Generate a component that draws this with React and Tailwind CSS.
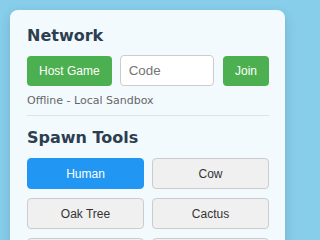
import { useState } from "react";

const tools = ["Human", "Cow", "Oak Tree", "Cactus", "Pine Tree", "Rock"];

const App = () => {
  const [selected, setSelected] = useState("Human");
  const [code, setCode] = useState("");

  return (
    <div className="h-screen w-full overflow-hidden bg-[#87ceeb] pt-[10px] pl-[10px]">
      <div className="w-[275px] rounded-lg bg-white/90 pt-4 pb-4 pl-[17px] pr-4 shadow-[0_4px_12px_rgba(0,0,0,0.15)] font-['DejaVu_Sans',sans-serif]">
        {/* network */}
        <h2 className="mb-[10px] text-[16px] leading-[19px] font-bold text-[#2c3e50]">Network</h2>
        <div className="flex items-center gap-2 font-['Liberation_Sans',Arial,sans-serif]">
          <button className="h-[30px] shrink-0 rounded bg-[#4caf50] px-3 text-[12px] text-white">
            Host Game
          </button>
          <input
            className="h-[31px] min-w-0 flex-1 rounded border border-[#ccc] bg-white px-2 text-[13.33px] text-[#333] outline-none placeholder:text-[#757575]"
            type="text"
            placeholder="Code"
            value={code}
            onChange={(e) => setCode(e.target.value)}
          />
          <button className="ml-px h-[30px] shrink-0 rounded bg-[#4caf50] px-3 text-[12px] text-white">
            Join
          </button>
        </div>
        <p className="mt-2 text-[11px] leading-[13px] text-[#666]">Offline - Local Sandbox</p>
        <div className="mt-[8px] border-t border-[#dde3e8]" />

        {/* spawn tools */}
        <h2 className="mt-[12px] mb-[11px] text-[16px] leading-[19px] font-bold text-[#2c3e50]">Spawn Tools</h2>
        <div className="grid grid-cols-2 gap-x-2 gap-y-[9px] font-['Liberation_Sans',Arial,sans-serif]">
          {tools.map((t) => (
            <button
              key={t}
              onClick={() => setSelected(t)}
              className={
                selected === t
                  ? "h-[31px] rounded border border-[#2196f3] bg-[#2196f3] text-[12px] text-white"
                  : "h-[31px] rounded border border-[#ccc] bg-[#f0f0f0] text-[12px] text-[#333]"
              }
            >
              {t}
            </button>
          ))}
        </div>
      </div>
    </div>
  );
};

export default App;
